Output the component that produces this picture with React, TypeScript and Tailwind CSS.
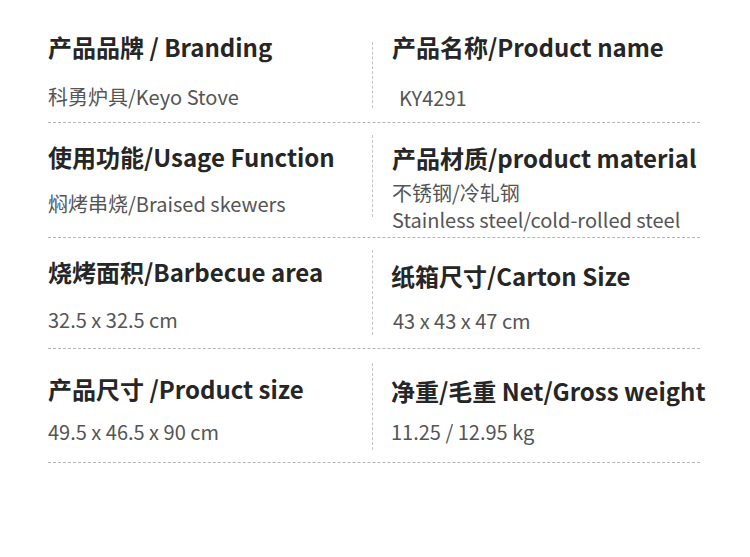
const font = { fontFamily: '"Noto Sans CJK SC", "Noto Sans", sans-serif' };

function Heading({ children, className = '' }: { children: React.ReactNode; className?: string }) {
    return <div className={`text-[24px] leading-[30px] font-bold text-[#262626] whitespace-nowrap ${className}`}>{children}</div>;
}

function Value({ children, className = '' }: { children: React.ReactNode; className?: string }) {
    return <div className={`text-[20px] leading-[26px] text-[#555] whitespace-nowrap ${className}`}>{children}</div>;
}

export default function App() {
    return (
        <div className="w-[750px] h-[557px] bg-white" style={font}>
            <div className="ml-[48px] w-[652px]">
                {/* Row 1 */}
                <div className="flex h-[123px] border-b border-dashed border-[#b5b5b5]">
                    <div className="w-[324px] shrink-0 pt-[32px]">
                        <Heading>产品品牌 / Branding</Heading>
                        <Value className="mt-[22px]">科勇炉具/Keyo Stove</Value>
                    </div>
                    <div className="shrink-0 mt-[42px] h-[66px] border-l border-dashed border-[#c4c4c4]" />
                    <div className="pl-[19px] pt-[32px]">
                        <Heading>产品名称/Product name</Heading>
                        <Value className="mt-[23px] pl-[7px]">KY4291</Value>
                    </div>
                </div>

                {/* Row 2 */}
                <div className="flex h-[115px] border-b border-dashed border-[#b5b5b5]">
                    <div className="w-[324px] shrink-0 pt-[19px]">
                        <Heading>使用功能/Usage Function</Heading>
                        <Value className="mt-[19px]">焖烤串烧/Braised skewers</Value>
                    </div>
                    <div className="shrink-0 mt-[12px] h-[82px] border-l border-dashed border-[#c4c4c4]" />
                    <div className="pl-[19px] pt-[20px]">
                        <Heading>产品材质/product material</Heading>
                        <Value className="mt-[7px]">不锈钢/冷轧钢</Value>
                        <Value className="mt-[1px]">Stainless steel/cold-rolled steel</Value>
                    </div>
                </div>

                {/* Row 3 */}
                <div className="flex h-[111px] border-b border-dashed border-[#b5b5b5]">
                    <div className="w-[324px] shrink-0 pt-[19px]">
                        <Heading>烧烤面积/Barbecue area</Heading>
                        <Value className="mt-[20px]">32.5 x 32.5 cm</Value>
                    </div>
                    <div className="shrink-0 mt-[12px] h-[85px] border-l border-dashed border-[#c4c4c4]" />
                    <div className="pl-[18px] pt-[23px]">
                        <Heading>纸箱尺寸/Carton Size</Heading>
                        <Value className="mt-[17px] pl-[2px]">43 x 43 x 47 cm</Value>
                    </div>
                </div>

                {/* Row 4 */}
                <div className="flex h-[114px] border-b border-dashed border-[#b5b5b5]">
                    <div className="w-[324px] shrink-0 pt-[25px]">
                        <Heading>产品尺寸 /Product size</Heading>
                        <Value className="mt-[15px]">49.5 x 46.5 x 90 cm</Value>
                    </div>
                    <div className="shrink-0 mt-[14px] h-[87px] border-l border-dashed border-[#c4c4c4]" />
                    <div className="pl-[18px] pt-[27px] whitespace-nowrap">
                        <Heading>净重/毛重 Net/Gross weight</Heading>
                        <Value className="mt-[13px]">11.25 / 12.95 kg</Value>
                    </div>
                </div>
            </div>
        </div>
    );
}
